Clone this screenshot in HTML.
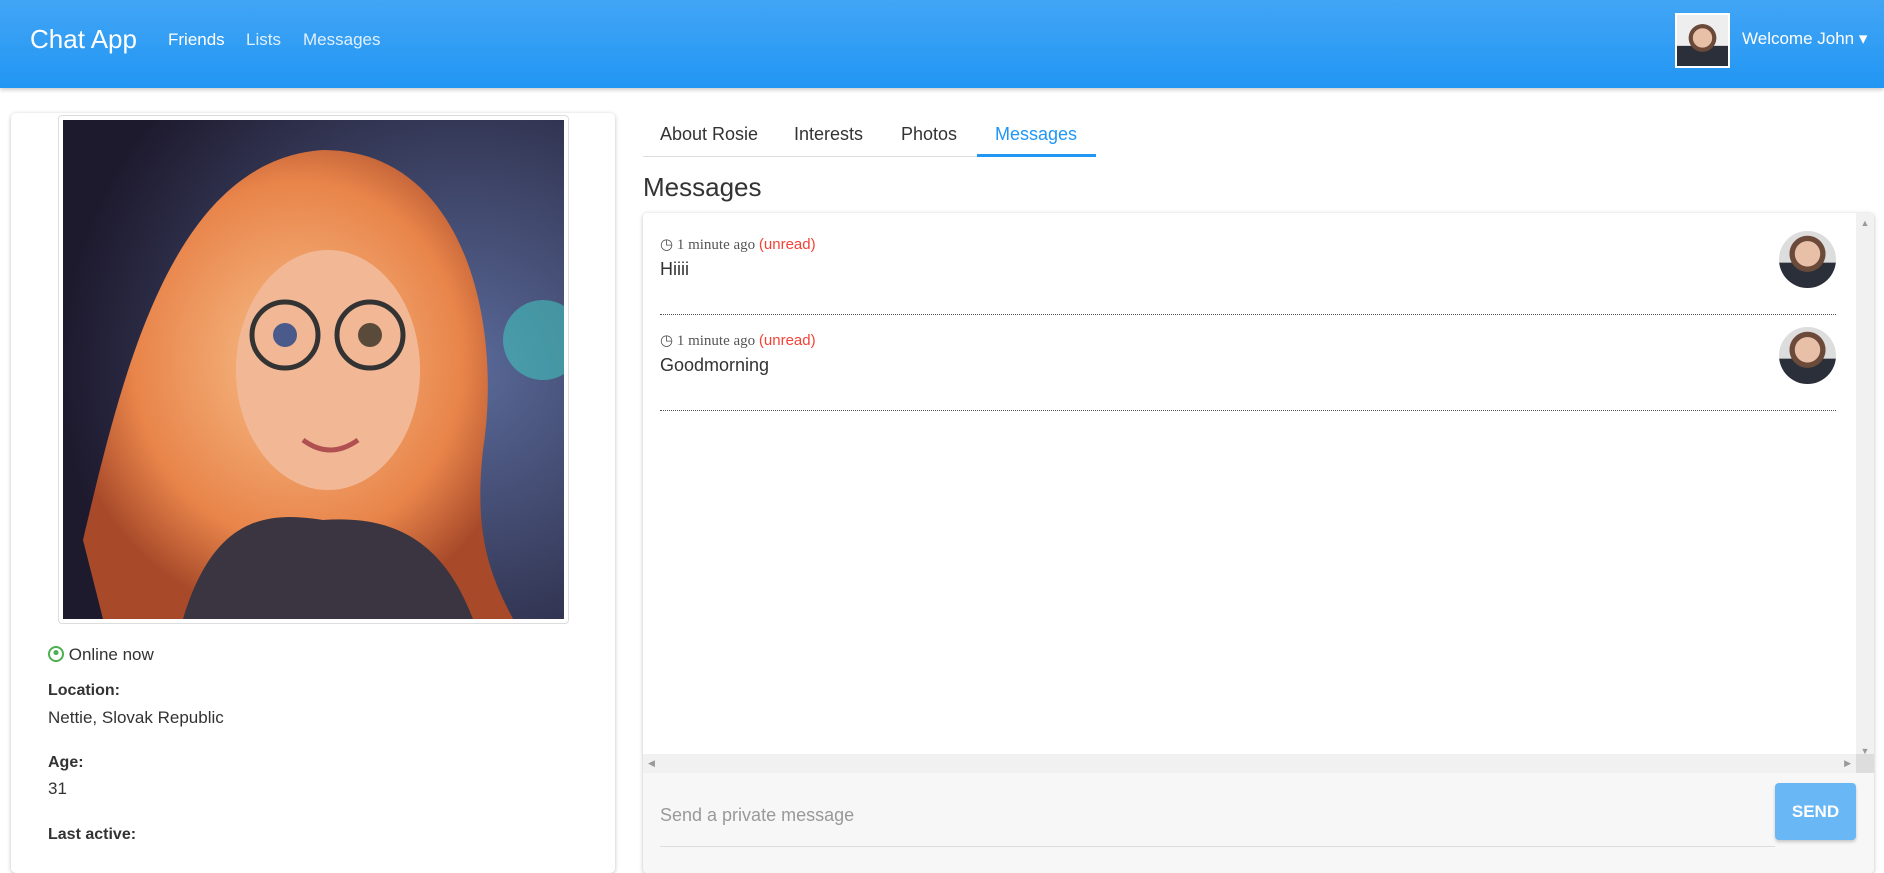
<!DOCTYPE html>
<html><head><meta charset="utf-8"><style>
*{box-sizing:border-box;margin:0;padding:0}
body{width:1884px;height:853px;overflow:hidden;background:#fff;font-family:"Liberation Sans",Roboto,sans-serif;color:#333;position:relative}
.nav{position:absolute;left:0;top:0;width:1884px;height:88px;background:linear-gradient(#42a5f5,#2196f3);box-shadow:0 2px 4px rgba(0,0,0,.2)}
.nav span{position:absolute;color:#fff}
.card{position:absolute;left:11px;top:113px;width:604px;height:760px;border-radius:5px;box-shadow:0 1px 4px rgba(0,0,0,.25);background:#fff}
.abs{position:absolute}
.tab{position:absolute;top:124px;font-size:18px;color:#333}
.box{position:absolute;left:643px;top:213px;width:1231px;height:660px;box-shadow:0 1px 4px rgba(0,0,0,.25);border-radius:4px;background:#fff;overflow:hidden}
.ts{position:absolute;left:17px;font-family:"Liberation Serif",serif;font-size:15px;color:#555}
.ts b{font-weight:normal;font-family:"Liberation Sans",sans-serif;color:#f44336}
.msg{position:absolute;left:17px;font-size:18px;color:#333}
.dot{position:absolute;left:17px;width:1176px;border-top:1px dotted #555}
.av{position:absolute;left:1136px;width:57px;height:57px;border-radius:50%;background:radial-gradient(circle at 50% 40%,#e8c0a8 0 28%,#6b4a3a 29% 40%,transparent 41%),linear-gradient(#ddd 0 55%,#2b2f3a 56%)}
</style></head><body>
<div class="nav">
<span style="left:30px;top:24px;font-size:26px">Chat App</span>
<span style="left:168px;top:30px;font-size:17px">Friends</span>
<span style="left:246px;top:30px;font-size:17px;opacity:.85">Lists</span>
<span style="left:303px;top:30px;font-size:17px;opacity:.85">Messages</span>
<div class="abs" style="left:1675px;top:13px;width:55px;height:55px;border:2px solid #fff;background:radial-gradient(circle at 50% 45%,#e8c0a8 0 25%,#6b4a3a 26% 36%,transparent 37%),linear-gradient(#eee 0 60%,#2b2f3a 61%)"></div>
<span style="left:1742px;top:29px;font-size:17px">Welcome John ▾</span>
</div>
<div class="card">
<div class="abs" style="left:47px;top:2px;width:511px;height:509px;border:1px solid #ddd;border-radius:4px;padding:4px">
<svg width="501" height="499" viewBox="0 0 501 499" style="display:block">
<defs><radialGradient id="bg" cx="80%" cy="50%" r="80%"><stop offset="0" stop-color="#5a6a9a"/><stop offset="1" stop-color="#1e1a2e"/></radialGradient>
<radialGradient id="hair" cx="50%" cy="45%" r="55%"><stop offset="0" stop-color="#f7c08a"/><stop offset=".7" stop-color="#e8844a"/><stop offset="1" stop-color="#a84a2a"/></radialGradient></defs>
<rect width="501" height="499" fill="url(#bg)"/>
<circle cx="480" cy="220" r="40" fill="#3fd6c8" opacity=".5"/>
<path d="M20 420 C60 250 110 40 260 30 C400 30 440 200 420 330 C410 420 430 460 450 499 L40 499 Z" fill="url(#hair)"/>
<ellipse cx="265" cy="250" rx="92" ry="120" fill="#f2b896"/>
<path d="M120 499 C150 400 200 390 260 400 C330 395 380 420 410 499 Z" fill="#3a3540"/>
<circle cx="222" cy="215" r="33" fill="none" stroke="#333" stroke-width="5"/>
<circle cx="307" cy="215" r="33" fill="none" stroke="#333" stroke-width="5"/>
<circle cx="222" cy="215" r="12" fill="#4a5a8a"/><circle cx="307" cy="215" r="12" fill="#5a4a3a"/>
<path d="M240 320 Q267 340 295 320" stroke="#b05050" stroke-width="5" fill="none"/>
</svg></div>
<div class="abs" style="left:37px;top:532px;font-size:17px"><span style="display:inline-block;width:16px;height:16px;border-radius:50%;border:2px solid #4caf50;vertical-align:-2px;background:radial-gradient(circle at 50% 38%,#4caf50 0 25%,transparent 27%)"></span> Online now</div>
<div class="abs" style="left:37px;top:569px;font-size:16px;font-weight:bold">Location:</div>
<div class="abs" style="left:37px;top:595px;font-size:17px">Nettie, Slovak Republic</div>
<div class="abs" style="left:37px;top:641px;font-size:16px;font-weight:bold">Age:</div>
<div class="abs" style="left:37px;top:666px;font-size:17px">31</div>
<div class="abs" style="left:37px;top:713px;font-size:16px;font-weight:bold">Last active:</div>
</div>
<div class="abs" style="left:643px;top:156px;width:453px;border-top:1px solid #ddd"></div>
<div class="abs" style="left:977px;top:154px;width:119px;height:3px;background:#2196f3"></div>
<span class="tab" style="left:660px">About Rosie</span>
<span class="tab" style="left:794px">Interests</span>
<span class="tab" style="left:901px">Photos</span>
<span class="tab" style="left:995px;color:#2196f3">Messages</span>
<div class="abs" style="left:643px;top:172px;font-size:26px;font-weight:500">Messages</div>
<div class="box">
<div class="ts" style="top:22px">◷ 1 minute ago <b>(unread)</b></div>
<div class="msg" style="top:46px">Hiiii</div>
<div class="dot" style="top:101px"></div>
<div class="av" style="top:18px"></div>
<div class="ts" style="top:118px">◷ 1 minute ago <b>(unread)</b></div>
<div class="msg" style="top:142px">Goodmorning</div>
<div class="dot" style="top:197px"></div>
<div class="av" style="top:114px"></div>
<div class="abs" style="left:1213px;top:0;width:18px;height:560px;background:#f1f1f1"><div style="color:#999;font-size:9px;text-align:center;margin-top:5px">▲</div><div style="color:#999;font-size:9px;text-align:center;margin-top:518px">▼</div></div>
<div class="abs" style="left:0;top:541px;width:1213px;height:19px;background:#f1f1f1;color:#999;font-size:9px;padding:4px 5px">◀<span style="float:right">▶</span></div>
<div class="abs" style="left:1213px;top:541px;width:18px;height:19px;background:#ddd"></div>
<div class="abs" style="left:0;top:560px;width:1231px;height:100px;background:#f7f7f7"></div>
<div class="abs" style="left:17px;top:592px;font-size:18px;color:#999">Send a private message</div>
<div class="abs" style="left:17px;top:633px;width:1115px;border-top:1px solid #ddd"></div>
<div class="abs" style="left:1132px;top:570px;width:81px;height:57px;background:#6ab7f5;border-radius:4px;box-shadow:0 2px 3px rgba(0,0,0,.2);color:#fff;font-size:17px;font-weight:bold;text-align:center;line-height:57px">SEND</div>
</div>
</body></html>
